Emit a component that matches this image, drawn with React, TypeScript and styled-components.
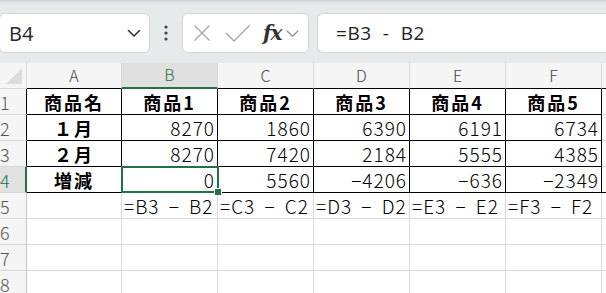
import React from 'react';
import styled, { createGlobalStyle } from 'styled-components';

const Global = createGlobalStyle`
  html, body { margin: 0; padding: 0; }
  body {
    background: #ffffff;
    font-family: "Noto Sans CJK JP", "Noto Sans", sans-serif;
    overflow: hidden;
  }
`;

const Page = styled.div`
  width: 606px;
  height: 293px;
  overflow: hidden;
  display: flex;
  flex-direction: column;
`;

const Toolbar = styled.div`
  height: 63px;
  flex: none;
  box-sizing: border-box;
  display: flex;
  align-items: flex-start;
  padding-top: 13px;
  background: linear-gradient(180deg, #c9cccd 0px, #dfe3e4 2px, #e6eaeb 4px, #e6eaeb 100%);
`;

const Box = styled.div<{ $w: number }>`
  width: ${(p) => p.$w}px;
  height: 40px;
  flex: none;
  box-sizing: border-box;
  background: #fff;
  border: 1px solid #d3d6d8;
  border-radius: 6px;
  display: flex;
  align-items: center;
`;

const NameBox = styled(Box)`
  margin-left: -1px;
  padding: 0 7px 0 9px;
  justify-content: space-between;
  font-family: "Open Sans", "Liberation Sans", sans-serif;
  font-size: 20px;
  color: #262626;
`;

const Dots = styled.div`
  width: 32px;
  flex: none;
  height: 40px;
  display: flex;
  align-items: center;
  justify-content: center;
`;

const FxBox = styled(Box)`
  padding: 0 4px 0 10px;
`;

const Fx = styled.span`
  font-family: "DejaVu Serif", "Liberation Serif", serif;
  font-style: italic;
  font-weight: bold;
  font-size: 20px;
  color: #333;
  margin-left: 12px;
  letter-spacing: -1px;
`;

const FormulaBox = styled(Box)`
  margin-left: 8px;
  padding-left: 18px;
  font-family: "Open Sans", "Liberation Sans", sans-serif;
  font-size: 19px;
  letter-spacing: 0.6px;
  color: #222;
  white-space: pre;
  border-right: none;
  border-radius: 6px 0 0 6px;
`;

const Grid = styled.div`
  position: relative;
  display: grid;
  grid-template-columns: 27px 95px 96px 96px 96px 96px 96px 40px;
  grid-auto-rows: 26px;
  background: #fff;
`;

type CellProps = {
  $right?: string;
  $bottom?: string;
  $align?: 'left' | 'center' | 'right';
  $bold?: boolean;
};

const Cell = styled.div<CellProps>`
  box-sizing: border-box;
  border-right: 1px solid ${(p) => p.$right || '#dadada'};
  border-bottom: 1px solid ${(p) => p.$bottom || '#dadada'};
  display: flex;
  align-items: center;
  justify-content: ${(p) => (p.$align === 'left' ? 'flex-start' : p.$align === 'center' ? 'center' : 'flex-end')};
  padding: 0 2px;
  font-size: ${(p) => (p.$bold ? 18 : 19)}px;
  color: #000;
  white-space: pre;
  overflow: visible;
  font-family: "Noto Sans CJK JP", sans-serif;
  font-weight: ${(p) => (p.$bold ? 700 : 300)};
  letter-spacing: ${(p) => (p.$bold ? '2px' : '1px')};
`;

const FormulaCell = styled(Cell)`
  word-spacing: 4px;
`;

const ColHead = styled.div<{ $sel?: boolean }>`
  box-sizing: border-box;
  background: ${(p) => (p.$sel ? '#e0e0e0' : '#f5f5f5')};
  border-right: 1px solid #d7d7d7;
  border-bottom: ${(p) => (p.$sel ? '2px solid #217346' : '1px solid #000')};
  display: flex;
  align-items: center;
  justify-content: center;
  font-family: "Noto Sans CJK JP", sans-serif;
  font-weight: 300;
  font-size: 16px;
  color: ${(p) => (p.$sel ? '#217346' : '#444')};
  padding-bottom: 2px;
`;

const Corner = styled.div`
  box-sizing: border-box;
  background: #f5f5f5;
  border-right: 1px solid #d7d7d7;
  border-bottom: 1px solid #d7d7d7;
  position: relative;
  &::after {
    content: '';
    position: absolute;
    right: 4px;
    bottom: 4px;
    border-left: 16px solid transparent;
    border-bottom: 16px solid #dcdcdc;
  }
`;

const RowHead = styled.div<{ $sel?: boolean; $edge?: string }>`
  box-sizing: border-box;
  background: ${(p) => (p.$sel ? '#e2e2e2' : '#f5f5f5')};
  border-bottom: 1px solid #d7d7d7;
  border-right: ${(p) => (p.$sel ? '2px solid #217346' : `1px solid ${p.$edge || '#c8c8c8'}`)};
  display: flex;
  align-items: center;
  padding-left: 0;
  font-family: "Noto Sans CJK JP", sans-serif;
  font-weight: 300;
  font-size: 18px;
  color: ${(p) => (p.$sel ? '#217346' : '#555')};
`;

const Selection = styled.div`
  position: absolute;
  left: 121px;
  top: 103px;
  width: 98px;
  height: 27px;
  box-sizing: border-box;
  border: 2px solid #217346;
  pointer-events: none;
  &::after {
    content: '';
    position: absolute;
    right: -5px;
    bottom: -5px;
    width: 6px;
    height: 6px;
    background: #217346;
    border: 1px solid #fff;
  }
`;

const Chevron = ({ size = 16, color = '#333' }: { size?: number; color?: string }) => (
  <svg width={size} height={size} viewBox="0 0 16 16" fill="none">
    <path d="M2.5 5.5 L8 11 L13.5 5.5" stroke={color} strokeWidth="1.6" strokeLinecap="round" strokeLinejoin="round" />
  </svg>
);

const cols = ['A', 'B', 'C', 'D', 'E', 'F', ''];
const header = ['商品名', '商品1', '商品2', '商品3', '商品4', '商品5'];
const jan = ['8270', '1860', '6390', '6191', '6734'];
const feb = ['8270', '7420', '2184', '5555', '4385'];
const diff = ['0', '5560', '-4206', '-636', '-2349'];
const formulas = ['=B3 - B2', '=C3 - C2', '=D3 - D2', '=E3 - E2', '=F3 - F2'];

const B = '#000';

export default function App() {
  const tableRow = (n: number, label: string, vals: string[], last = false) => (
    <React.Fragment key={n}>
      <RowHead $sel={n === 4} $edge={B}>{n}</RowHead>
      <Cell $right={B} $bottom={B} $align="center" $bold>
        {label}
      </Cell>
      {vals.map((v, i) => (
        <Cell key={i} $right={B} $bottom={B}>
          {v.replace('-', '−')}
        </Cell>
      ))}
      <Cell $bottom={last ? B : undefined} />
    </React.Fragment>
  );

  return (
    <Page>
      <Global />
      <Toolbar>
        <NameBox $w={151}>
          <span>B4</span>
          <Chevron />
        </NameBox>
        <Dots>
          <svg width="4" height="16" viewBox="0 0 4 16">
            <circle cx="2" cy="2" r="1.6" fill="#444" />
            <circle cx="2" cy="8" r="1.6" fill="#444" />
            <circle cx="2" cy="14" r="1.6" fill="#444" />
          </svg>
        </Dots>
        <FxBox $w={127}>
          <svg width="18" height="18" viewBox="0 0 18 18">
            <path d="M1.5 1.5 L16.5 16.5 M16.5 1.5 L1.5 16.5" stroke="#a8a8a8" strokeWidth="1.4" />
          </svg>
          <svg width="26" height="18" viewBox="0 0 26 18" style={{ marginLeft: 14 }}>
            <path d="M1 9 L9 17 L25 1" stroke="#a8a8a8" strokeWidth="1.4" fill="none" />
          </svg>
          <Fx>fx</Fx>
          <span style={{ marginLeft: 3, display: 'flex' }}>
            <Chevron size={15} color="#999" />
          </span>
        </FxBox>
        <FormulaBox $w={300}>{'=B3  -  B2'}</FormulaBox>
      </Toolbar>
      <Grid>
        <Corner />
        {cols.map((c, i) => (
          <ColHead key={i} $sel={c === 'B'}>
            {c}
          </ColHead>
        ))}
        <RowHead $edge={B}>1</RowHead>
        {header.map((h, i) => (
          <Cell key={i} $right={B} $bottom={B} $align="center" $bold>
            {h}
          </Cell>
        ))}
        <Cell />
        {tableRow(2, '１月', jan)}
        {tableRow(3, '２月', feb)}
        {tableRow(4, '増減', diff, true)}
        <RowHead>5</RowHead>
        <Cell />
        {formulas.map((f, i) => (
          <FormulaCell key={i} $align="left">
            {f.replace('-', '−')}
          </FormulaCell>
        ))}
        <Cell />
        {[6, 7, 8].map((n) => (
          <React.Fragment key={n}>
            <RowHead>{n}</RowHead>
            {cols.map((_, i) => (
              <Cell key={i} />
            ))}
          </React.Fragment>
        ))}
        <Selection />
      </Grid>
    </Page>
  );
}
